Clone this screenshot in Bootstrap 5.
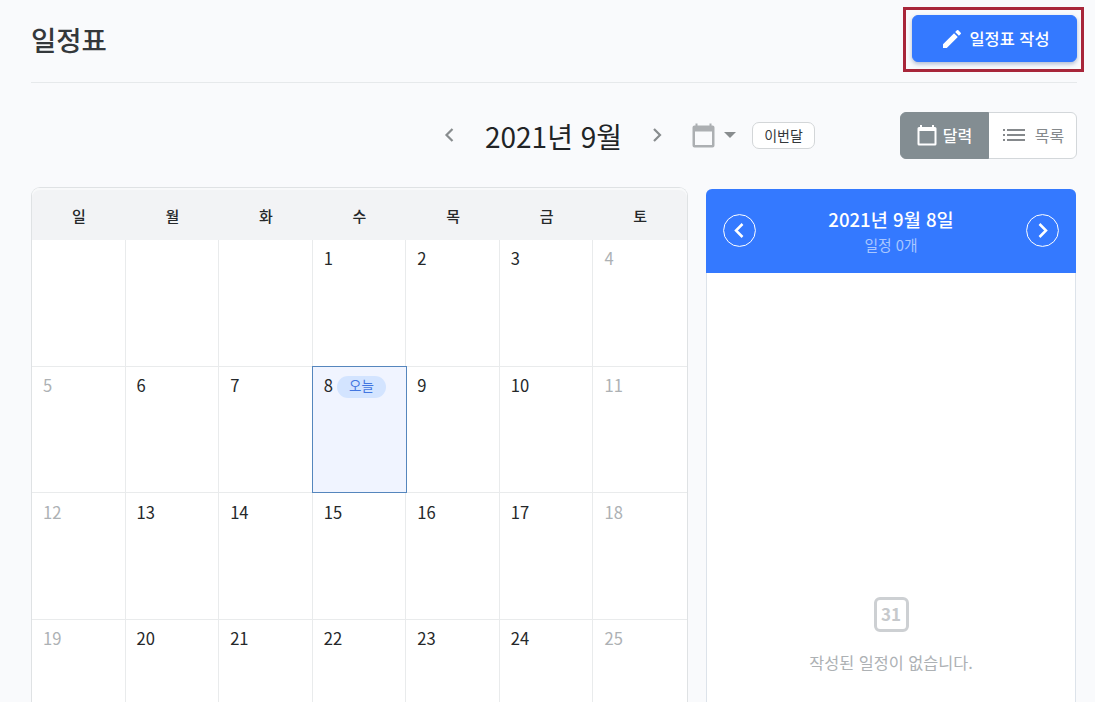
<!DOCTYPE html>
<html lang="ko">

<head>
    <meta charset="UTF-8">
    <meta name="viewport" content="width=device-width, initial-scale=1.0">
    <title>일정표</title>
    <link href="https://cdn.jsdelivr.net/npm/bootstrap@5.3.2/dist/css/bootstrap.min.css" rel="stylesheet">
    <script src="https://cdn.jsdelivr.net/npm/bootstrap@5.3.2/dist/js/bootstrap.bundle.min.js"></script>
    <style>
        body {
            height: 100vh;
            background: #f9fafc;
            color: #25282a;
            font-family: "Noto Sans CJK KR", sans-serif;
        }

        svg { display: block; flex: none; }

        .page-head { flex: none; height: 83px; margin: 0 18px 0 31px; border-bottom: 1px solid #e6e9eb; }
        .page-title { font-size: 27.5px; font-weight: 500; line-height: 40px; margin-top: 19px; color: #34383b; }

        .write-frame { width: 181px; height: 65px; margin: 7px -7px 0 0; padding: 5px 4px 0 6px; border: 3px solid #a8263a; }
        .btn-write { --bs-btn-bg: #3479ff; --bs-btn-border-color: #3479ff; height: 47px; gap: 6px; border-radius: 6px; padding: 0; font-size: 16.4px; font-weight: 500; box-shadow: 0 2px 4px rgba(40, 70, 130, .35); }

        .toolbar { flex: none; display: grid; grid-template-columns: 442px 1fr auto; height: 104px; margin: 0 18px 0 0; }
        .month-nav { grid-column: 2; color: #888c8e; }
        .month-label { width: 136px; margin: 1px 28px 0 28px; font-size: 28px; line-height: 40px; color: #212426; white-space: nowrap; }
        .month-icon { margin-left: 27px; }
        .month-caret { margin-left: 9px; }
        .btn-month { width: 63px; height: 27px; margin-left: 16px; padding: 0; border: 1px solid #d3d6d8; border-radius: 7px; background: #fff; font-size: 14px; line-height: 24px; color: #34383b; }

        .view-switch { width: 177px; height: 47px; margin-top: 29px; }
        .view-switch .btn { gap: 10px; padding: 0 0 1px 2px; font-size: 16px; border-radius: 6px; border-color: #d3d7da; background: #fff; color: #85898c; }
        .view-switch .btn.active { width: 89px; flex: none; gap: 6px; padding-left: 0; border-color: #838d92; background: #838d92; color: #fff; font-weight: 500; }

        .board { display: grid; grid-template-columns: 657px 370px; grid-template-rows: minmax(0, 1fr); gap: 18px; min-height: 0; margin-left: 31px; }
        .cal { border: 1px solid #dfe2e4; border-bottom: 0; border-radius: 9px 9px 0 0; background: #fff; }
        .cal-row { display: grid; grid-template-columns: repeat(7, 1fr); }
        .cal-head { flex: none; height: 52px; border-radius: 8px 8px 0 0; background: #f2f3f5; box-shadow: inset 0 2px #f8f9fa; font-size: 15px; font-weight: 500; line-height: 56px; text-align: center; }
        .cal-week { flex: none; height: 126.6px; }
        .cal-week:last-child { flex: 1; height: auto; }
        .day { padding: 6px 0 0 11px; border-right: 1px solid #e9ebec; border-bottom: 1px solid #e9ebec; font-size: 16.6px; line-height: 25px; }
        .cal-week:nth-child(4) .day { padding-top: 7px; }
        .cal-week:last-child .day { border-bottom: 0; }
        .day:last-child { border-right: 0; }
        .day.off { color: #adb1b4; }
        .day.today { margin: -1px -1px 0 -1px; border: 1px solid #5586bd; background: #f0f4ff; }
        .today-tag { width: 49px; height: 22px; margin: 3px 0 0 4px; border-radius: 11px; background: #d3e4ff; color: #4376e0; font-size: 13.5px; line-height: 19px; text-align: center; }

        .panel { margin-top: 2px; border: 1px solid #dde3ea; border-width: 0 1px; border-radius: 6px 6px 0 0; background: #fff; }
        .panel-head { height: 84px; margin: 0 -1px; padding: 0 17px; border-radius: 6px 6px 0 0; background: #3479ff; color: #fff; }
        .panel-head svg { margin-top: -1px; }
        .panel-date { font-size: 18.6px; font-weight: 500; line-height: 28px; }
        .panel-count { font-size: 14.8px; line-height: 24px; color: #a9c7ff; }
        .empty-note { padding-top: 324px; color: #adb1b4; font-size: 16.3px; }
        .date-icon { width: 35px; height: 35px; border: 3px solid #cdd0d3; border-radius: 6px; color: #c6c9cc; font-size: 17px; font-weight: 700; line-height: 27px; text-align: center; }
        .empty-note p { margin: 16px 0 0; line-height: 28px; }
    </style>
</head>

<body class="d-flex flex-column overflow-hidden">
    <header class="page-head d-flex justify-content-between align-items-start">
        <h1 class="page-title mb-0">일정표</h1>
        <div class="write-frame">
            <button type="button" class="btn btn-primary btn-write w-100 d-flex align-items-center justify-content-center">
                <svg width="24" height="24" viewBox="0 0 24 24" fill="currentColor"><path d="M3 17.25V21h3.75L17.81 9.94l-3.75-3.75L3 17.25zM20.71 7.04a1 1 0 0 0 0-1.41l-2.34-2.34a1 1 0 0 0-1.41 0l-1.83 1.83 3.75 3.75 1.83-1.83z"/></svg>
                <span>일정표 작성</span>
            </button>
        </div>
    </header>

    <div class="toolbar">
        <div class="month-nav d-flex align-items-center">
            <svg width="15" height="16" viewBox="0 0 15 16" fill="none" stroke="currentColor" stroke-width="2.2"><path d="M10.5 2 4.5 8l6 6"/></svg>
            <div class="month-label">2021년 9월</div>
            <svg width="16" height="16" viewBox="0 0 16 16" fill="none" stroke="currentColor" stroke-width="2.2"><path d="m5 2 6 6-6 6"/></svg>
            <svg width="23" height="25" viewBox="0 0 23 25" class="month-icon"><path fill="#acafb2" d="M3.500 0.500h2v2h12v-2h2v2h1a2 2 0 0 1 2 2v18a2 2 0 0 1-2 2h-18a2 2 0 0 1-2-2v-18a2 2 0 0 1 2-2h1zM3 8.500V22h17V8.500z"/></svg>
            <svg width="12" height="6" viewBox="0 0 12 6" fill="currentColor" class="month-caret"><path d="M0 0h12L6 6z"/></svg>
            <button type="button" class="btn btn-month">이번달</button>
        </div>
        <div class="view-switch btn-group">
            <button type="button" class="btn active d-flex align-items-center justify-content-center">
                <svg width="20" height="22" viewBox="0 0 20 22"><path fill="currentColor" d="M3 1h2v2h10V1h2v2h1a1.500 1.500 0 0 1 1.500 1.500v15.500a1.500 1.500 0 0 1-1.500 1.500H2a1.500 1.500 0 0 1-1.500-1.500V4.500A1.500 1.500 0 0 1 2 3h1zM2.500 7v12.500h15V7z"/></svg>
                <span>달력</span>
            </button>
            <button type="button" class="btn d-flex align-items-center justify-content-center">
                <svg width="22" height="12" viewBox="0 0 22 12" fill="currentColor"><path d="M0 0h2v2H0zM4 0h18v2H4zM0 5h2v2H0zM4 5h18v2H4zM0 10h2v2H0zM4 10h18v2H4z"/></svg>
                <span>목록</span>
            </button>
        </div>
    </div>

    <main class="board flex-grow-1">
        <section class="cal d-flex flex-column">
            <div class="cal-row cal-head">
                <div>일</div>
                <div>월</div>
                <div>화</div>
                <div>수</div>
                <div>목</div>
                <div>금</div>
                <div>토</div>
            </div>
            <div class="cal-row cal-week">
                <div class="day off"></div>
                <div class="day"></div>
                <div class="day"></div>
                <div class="day">1</div>
                <div class="day">2</div>
                <div class="day">3</div>
                <div class="day off">4</div>
            </div>
            <div class="cal-row cal-week">
                <div class="day off">5</div>
                <div class="day">6</div>
                <div class="day">7</div>
                <div class="day today d-flex align-items-start position-relative">8<span class="today-tag">오늘</span></div>
                <div class="day">9</div>
                <div class="day">10</div>
                <div class="day off">11</div>
            </div>
            <div class="cal-row cal-week">
                <div class="day off">12</div>
                <div class="day">13</div>
                <div class="day">14</div>
                <div class="day">15</div>
                <div class="day">16</div>
                <div class="day">17</div>
                <div class="day off">18</div>
            </div>
            <div class="cal-row cal-week">
                <div class="day off">19</div>
                <div class="day">20</div>
                <div class="day">21</div>
                <div class="day">22</div>
                <div class="day">23</div>
                <div class="day">24</div>
                <div class="day off">25</div>
            </div>
        </section>

        <aside class="panel">
            <div class="panel-head d-flex align-items-center justify-content-between">
                <svg width="33" height="33" viewBox="0 0 33 33" fill="none" stroke="currentColor"><circle cx="16.500" cy="16.500" r="15.900"/><path stroke-width="2.500" d="m19.500 10-6.500 6.500 6.500 6.500"/></svg>
                <div class="text-center">
                    <div class="panel-date">2021년 9월 8일</div>
                    <div class="panel-count">일정 0개</div>
                </div>
                <svg width="33" height="33" viewBox="0 0 33 33" fill="none" stroke="currentColor"><circle cx="16.500" cy="16.500" r="15.900"/><path stroke-width="2.500" d="m13.500 10 6.500 6.500-6.500 6.500"/></svg>
            </div>
            <div class="empty-note d-flex flex-column align-items-center">
                <div class="date-icon">31</div>
                <p>작성된 일정이 없습니다.</p>
            </div>
        </aside>
    </main>
</body>

</html>
